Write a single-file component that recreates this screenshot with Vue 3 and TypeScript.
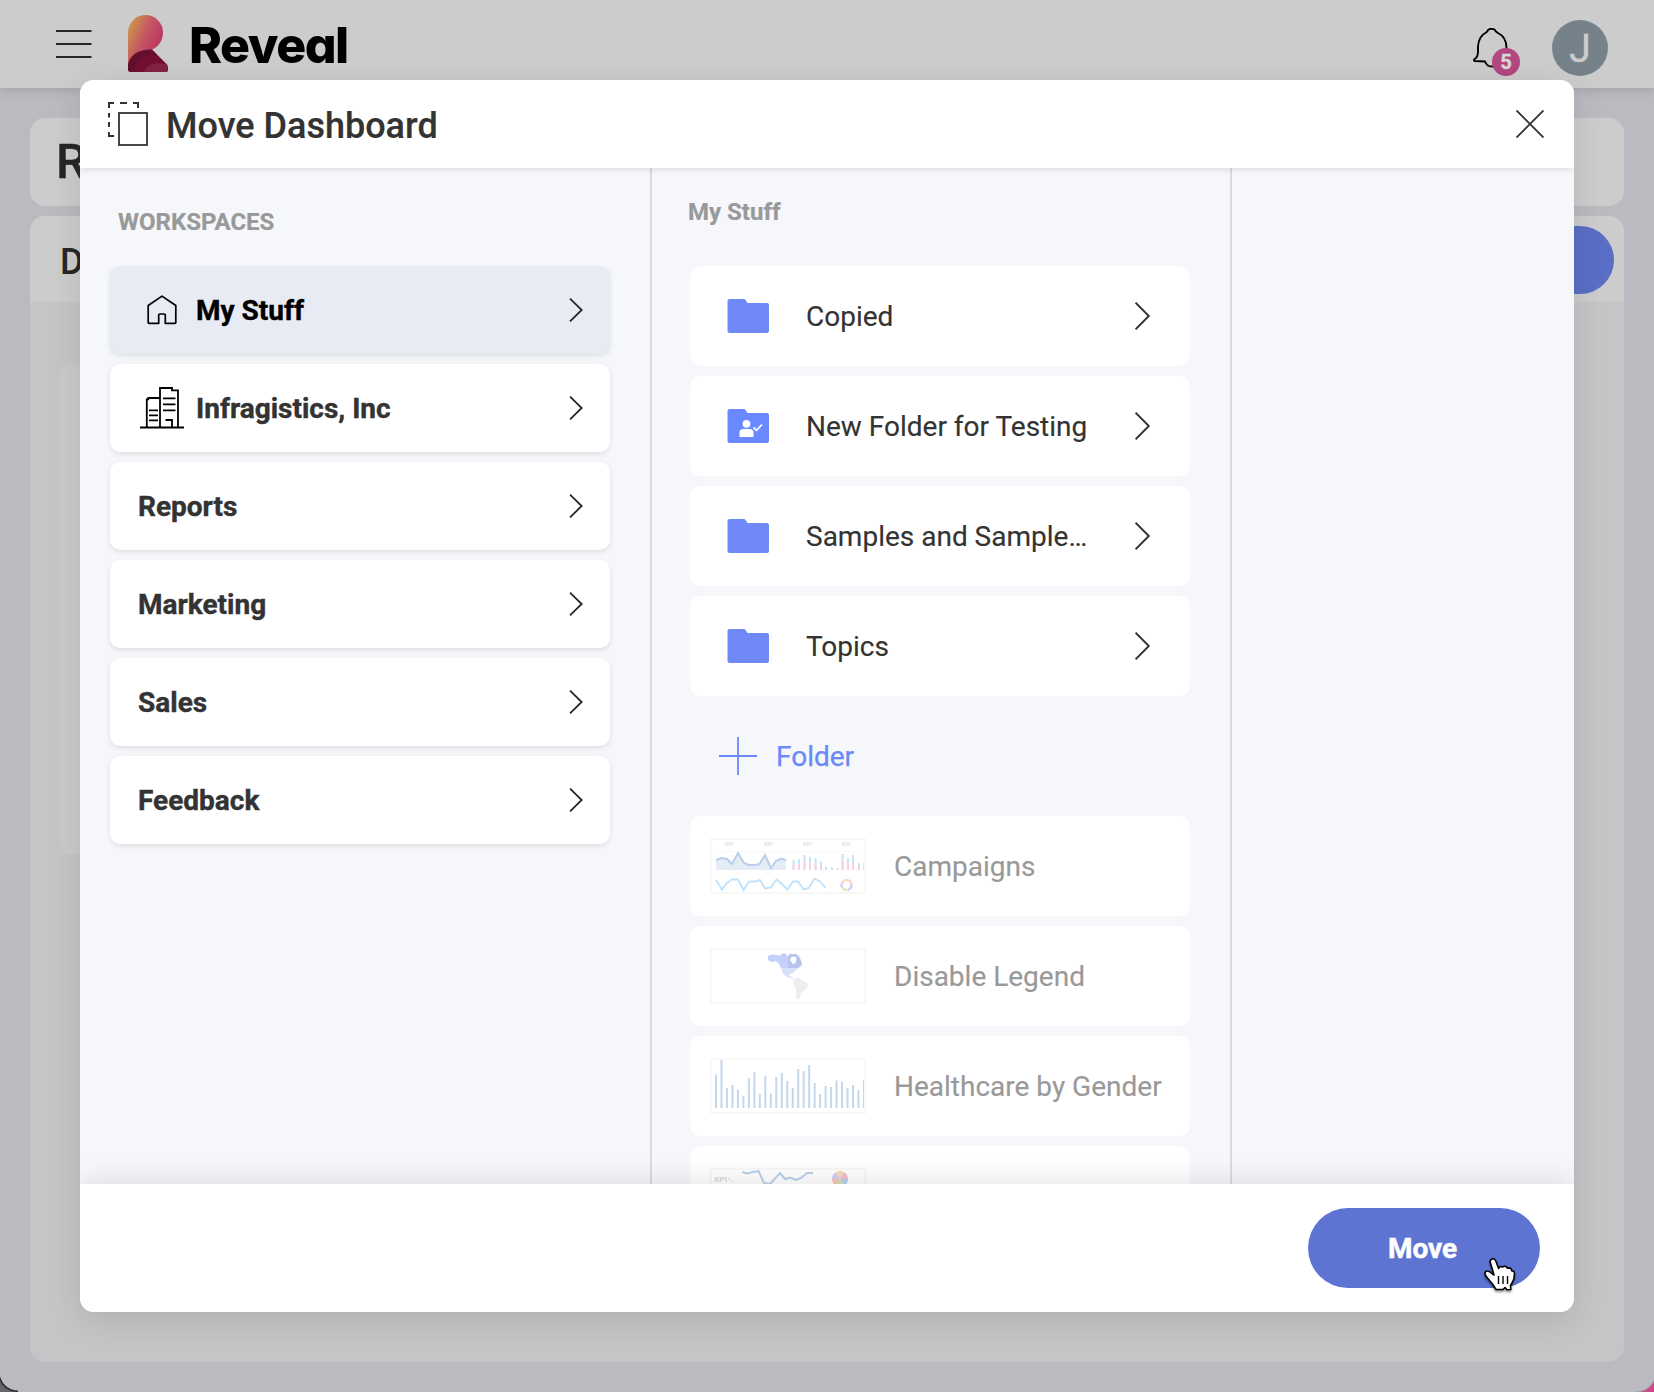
<script setup lang="ts">
interface Workspace { name: string; icon?: 'home' | 'building'; active?: boolean }
interface Folder { name: string; shared?: boolean }

const workspaces: Workspace[] = [
  { name: 'My Stuff', icon: 'home', active: true },
  { name: 'Infragistics, Inc', icon: 'building' },
  { name: 'Reports' },
  { name: 'Marketing' },
  { name: 'Sales' },
  { name: 'Feedback' },
]

const folders: Folder[] = [
  { name: 'Copied' },
  { name: 'New Folder for Testing', shared: true },
  { name: 'Samples and Sample…' },
  { name: 'Topics' },
]

const dashboards: string[] = ['Campaigns', 'Disable Legend', 'Healthcare by Gender', '']

// Bar heights for the healthcare thumbnail, left to right
const bars: number[] = [33.5, 48, 20, 23, 18, 12, 30, 36, 14, 32, 14.5, 31, 35, 27, 20, 39, 37, 43, 25, 14, 22, 21, 27.5, 26, 20, 23, 18, 28]
// Blue and pink parts of the campaign thumbnail's stacked bars: x, total, pink
const stacks: number[][] = [
  [82.5, 10, 5.5], [88, 11, 6], [93.5, 15, 8], [99, 13, 7], [104.5, 12, 6.5], [110, 8.5, 4],
  [115, 3, 1], [121, 3, 1], [126.5, 2, 1], [131.5, 16, 8.5], [137, 12, 6.5], [142, 15, 8], [148, 7, 4], [153.5, 8, 4],
]
</script>

<template>
  <div class="window">
    <header class="topbar">
      <svg class="burger" width="36" height="30" viewBox="0 0 36 30"><path d="M0 2H35.500M0 15H35.500M0 28H35.500" stroke="#262626" stroke-width="2" /></svg>
      <svg class="mark" width="40" height="57" viewBox="0 0 40 57">
        <defs>
          <linearGradient id="flame" x1="0" y1="0.15" x2="0.9" y2="0.75">
            <stop offset="0" stop-color="#ce9b4b" /><stop offset="0.5" stop-color="#c45563" /><stop offset="1" stop-color="#b92f61" />
          </linearGradient>
          <clipPath id="foot"><path d="M0 54V51C1 41 9 34.500 24 34.500L39 49.500Q40 51 40 54.500Q40 57 37.500 57H3Q0 57 0 54Z" /></clipPath>
        </defs>
        <path d="M0 17.500A17.500 17.500 0 0 1 35 17.500C35 26 30 32 24 34.500L18 45L0 52Z" fill="url(#flame)" />
        <path d="M0 54V51C1 41 9 34.500 24 34.500L39 49.500Q40 51 40 54.500Q40 57 37.500 57H3Q0 57 0 54Z" fill="#73102f" />
        <g clip-path="url(#foot)">
          <path d="M0 57V49C2 39 10 34 24 34.500L29 39.500C16 39 8 46 4 57Z" fill="#640f2d" />
          <path d="M16 57C20 49 27 47 38 49L41 57Z" fill="#812444" />
        </g>
      </svg>
      <span class="brand">Reveal</span>
      <span class="spacer"></span>
      <div class="bell">
        <svg width="36" height="40" viewBox="0 0 36 40"><path d="M15 2Q18.500-.5 22 2Q22.500 4 25 5Q33.500 9 33.500 20V25Q34 30 37 33L25 33Q24 38.500 18.500 38.500Q14 38.500 12 33.500L1.500 33Q0 32 3 30Q5 28 5 24V18Q6 8 13 4.500Q14.500 4 15 2Z" fill="none" stroke="#000" stroke-width="1.900" /></svg>
        <span class="badge">5</span>
      </div>
      <div class="avatar">J</div>
    </header>

    <main class="page">
      <section class="panel title">R</section>
      <section class="panel content">
        <div class="toolbar"><span>D</span><span class="pill"></span></div>
        <div class="ghost"></div>
      </section>
    </main>
    <i class="corner left"></i><i class="corner right"></i>

    <div class="dialog">
      <div class="dialog-head">
        <svg class="move-icon" width="40" height="44" viewBox="0 0 40 44" fill="none" stroke="#333" stroke-width="2">
          <rect x="11" y="11" width="28" height="32" stroke-width="1.800" />
          <path d="M6 1H1V6M12 1H19M25 1H30V6M1 11V15.500M1 20V25M1 30V34H6" />
        </svg>
        <h1>Move Dashboard</h1>
        <svg class="close" width="28" height="28" viewBox="0 0 28 28"><path d="M.5.5 27.500 27.500M27.500.5.5 27.500" stroke="#333" stroke-width="1.900" /></svg>
      </div>

      <div class="columns">
        <div class="col first">
          <h2>WORKSPACES</h2>
          <div v-for="w in workspaces" :key="w.name" class="ws" :class="{ active: w.active, iconed: w.icon }">
            <span v-if="w.icon" class="ws-icon">
              <svg v-if="w.icon === 'home'" width="30" height="30" viewBox="0 0 30 30"><path d="M1.200 10.500 15 1.100 28.800 10.500V27.500Q28.800 28.300 28 28.300H18.300V20Q18.300 19 17.300 19H12.700Q11.700 19 11.700 20V28.300H2Q1.200 28.300 1.200 27.500Z" fill="none" stroke="#000" stroke-width="1.700" stroke-linejoin="round" /></svg>
              <svg v-else width="44" height="42" viewBox="0 0 44 42" fill="none" stroke="#000" stroke-width="1.800"><path d="M0 40.500H44M6.800 40V12.300H8.300V11H19.800M20 40V1H32V3.300H38V40M23 11.300H35.500M23 17.300H35.500M23 23.300H35.500M9 23.300H18M9 28.300H18M9 33.300H18M25.500 33H32V40" /></svg>
            </span>
            <span class="ws-name">{{ w.name }}</span>
            <svg class="chev" width="14" height="24" viewBox="0 0 14 24"><path d="M1 .7 12.700 12 1 23.300" fill="none" stroke="#262626" stroke-width="1.800" /></svg>
          </div>
        </div>

        <div class="col second">
          <h2>My Stuff</h2>
          <div v-for="f in folders" :key="f.name" class="item">
            <svg class="folder" width="42" height="34" viewBox="0 0 42 34">
              <path d="M2.500 0H17Q18 0 18.500 1L20.500 4H40Q42 4 42 6V32Q42 34 40 34H2.500Q.5 34 .5 32V2Q.5 0 2.500 0Z" :fill="f.shared ? '#6a88ff' : '#6f8af7'" />
              <g v-if="f.shared" fill="#fff"><circle cx="19.500" cy="14.800" r="3.900" /><path d="M12.500 28V23.500Q12.500 20 16.500 20H22.500Q26.500 20 26.500 23.500V28Z" /><path d="M26.500 18.500 29.500 21.300 35 15.500" fill="none" stroke="#fff" stroke-width="1.800" /></g>
            </svg>
            <span class="item-name">{{ f.name }}</span>
            <svg class="chev" width="16" height="28" viewBox="0 0 16 28"><path d="M.6 .7 13.800 14 .6 27.300" fill="none" stroke="#333" stroke-width="1.900" /></svg>
          </div>

          <div class="add">
            <svg width="38" height="38" viewBox="0 0 38 38"><path d="M19 0V38M0 19H38" stroke="#6b88fb" stroke-width="1.800" /></svg>
            <span>Folder</span>
          </div>

          <div v-for="(d, i) in dashboards" :key="i" class="item dash">
            <svg class="thumb" width="156" height="56" viewBox="0 0 156 56">
              <g v-if="i === 0">
                <path d="M7 13.500H153" stroke="#f9f9f9" />
                <g class="kpi" font-size="5"><text x="15" y="8">KPI•</text><text x="54" y="8">KPI•</text><text x="93" y="8">KPI•</text><text x="132" y="8">KPI•</text></g>
                <path d="M6 22 11.500 20 17 21 22 26 28 15 34 25 39 27H45L49.500 26 55 17 61 30 66 23 71 20.500 76 22V32H6Z" fill="#e5ecf6" />
                <path d="M6 22 11.500 20 17 21 22 26 28 15 34 25 39 27H45L49.500 26 55 17 61 30 66 23 71 20.500 76 22" fill="none" stroke="#bacfe9" stroke-width="2" />
                <path d="M6 42 12 51.500 17 45 22 41.500H28L33.500 52 39 43.500H45L50 42 55 50.500 61 49.500 66.500 41.500 72 46 77.500 51.500 83 43.500H88L93.500 51.500 99 50 104.500 40.500 110 43.500 115.500 50" fill="none" stroke="#c1e2fb" stroke-width="1.900" />
                <g v-for="(s, k) in stacks" :key="k"><rect :x="s[0]" :y="32 - s[1]" width="2" :height="s[1]" fill="#c5e5fa" /><rect :x="s[0]" :y="32 - s[2]" width="2" :height="s[2]" fill="#fad0de" /></g>
                <g fill="none" stroke-width="2.400" stroke-dasharray="6.280 25.130"><circle cx="136.500" cy="47" r="5" stroke="#fad0de" stroke-dashoffset="6.280" /><circle cx="136.500" cy="47" r="5" stroke="#c6d6ee" /><circle cx="136.500" cy="47" r="5" stroke="#d6edc9" stroke-dashoffset="-6.280" /><circle cx="136.500" cy="47" r="5" stroke="#ddd0f3" stroke-dashoffset="-12.560" /><circle cx="136.500" cy="47" r="5" stroke="#fbdcbf" stroke-dashoffset="-18.840" /></g>
              </g>
              <g v-else-if="i === 1">
                <path d="M58 8 62 6.500 72 7.500H77L84 9 88 7 90 11 91.500 14 92 17 88 20H71L69 16 66 13 61 14 58 12Z" fill="#c5d0fb" />
                <path d="M78 8H82L86 10H90L92 17 88 20H78Z" fill="#b7c3ee" />
                <path d="M71 6 75 5.500 77 7.500 72 8ZM79 6 86 6 89 8 90 12 86 10 79 8Z" fill="#b9c6f2" />
                <path d="M80 12 81 9.500 83.500 8.500 86.500 9.500 86 14 83 16.500 81.500 14Z" fill="#fff" />
                <path d="M71 20H88L83 25 80 26 79 28 82 29 84 31 77 29 73 26Z" fill="#d9e0fc" />
                <path d="M84 31 88 30 92 32 98 36 96 41 91 45 89 51 86 51 86 40 83 35Z" fill="#ededed" />
              </g>
              <g v-else-if="i === 2"><rect v-for="(h, k) in bars" :key="k" :x="5 + k * 5.480" :y="50 - h" width="2" :height="h" fill="#c3d7ed" /></g>
              <g v-else>
                <g class="kpi bold"><text x="4.500" y="14" font-size="8">KPI</text></g><path d="M18 10 22 13" stroke="#c9c9fb" stroke-dasharray="1 1" />
                <path d="M32 4 37.500 5.500 43 4 48.500 3 54 15 60 16 70 5 75 11 80 9.500 86 12 91 10 97 5H103" fill="none" stroke="#b9d0ea" stroke-width="2" />
                <g transform="translate(130 11)"><path d="M0 0-4-7A8 8 0 0 1 4-7Z" fill="#fadcb2" /><path d="M0 0 4-7A8 8 0 0 1 8 0Z" fill="#f5bdd2" /><path d="M0 0H8A8 8 0 0 1 4 7Z" fill="#b9cfea" /><path d="M0 0 4 7A8 8 0 0 1-4 7Z" fill="#c9e5b8" /><path d="M0 0-4 7A8 8 0 0 1-8 0Z" fill="#fbc6b8" /><path d="M0 0H-8A8 8 0 0 1-4-7Z" fill="#d9cbf2" /></g>
              </g>
              <rect x="1" y="1" width="154" height="54" fill="none" stroke="#f7f7f7" stroke-width="2" />
            </svg>
            <span class="dash-name">{{ d }}</span>
          </div>
        </div>
        <div class="col third"></div>
      </div>

      <div class="dialog-foot">
        <button class="move">Move</button>
      </div>
    </div>

    <svg class="cursor" width="34" height="38" viewBox="0 0 34 38">
      <path d="M9 2Q11.500 1 12.800 4L15.600 11.500Q16.500 8.600 19.500 10Q22.500 8 24.300 11.200Q28 10 29 14Q31.500 13.500 31.500 17Q31.500 22 29 26L27.500 28.500 27.800 32.500 24 32.800 22 30.500 20 32.500H13L9.500 27 4 20.500Q1 17 2.500 14.800Q5 12.500 9.500 17L11 18 7.300 5.500Q6.500 3 9 2Z" fill="#fff" stroke="#000" stroke-width="1.600" stroke-linejoin="round" />
      <path d="M15.500 19V27M20 19V27M24.500 19V27" stroke="#000" stroke-width="1.400" />
    </svg>
  </div>
</template>

<style>
body { margin: 0; background: #c9c9c9; }
</style>

<style scoped>
* { box-sizing: border-box; }
svg { display: block; flex: none; }
.window { position: relative; width: 1654px; height: 1392px; overflow: hidden; background: #b9bbc1; font-family: Roboto, sans-serif; color: #333; }
.topbar { position: relative; height: 88px; display: flex; align-items: flex-start; background: #ccc; box-shadow: 0 2px 10px rgba(0, 0, 0, .14); padding-right: 46px; }
.burger { margin: 29px 0 0 56px; }
.mark { margin: 15px 0 0 36px; padding-top: 0; }
.brand { margin: 15px 0 0 21px; font: 800 50px/60px Inter, sans-serif; font-feature-settings: "cv11"; letter-spacing: -1.500px; color: #000; }
.spacer { flex: 1; }
.bell { position: relative; margin: 28px 0 0; width: 79px; height: 48px; }
.badge { position: absolute; left: 19px; top: 20px; width: 28px; height: 28px; border-radius: 50%; background: #b3477f; color: #d8d8d8; font-weight: 700; font-size: 20px; line-height: 29px; text-align: center; -webkit-text-stroke: .4px #d8d8d8; }
.avatar { margin-top: 20px; width: 56px; height: 56px; border-radius: 50%; background: #758289; color: #ccc; font-size: 39px; line-height: 58px; text-align: center; -webkit-text-stroke: .4px #ccc; }
.page { padding: 30px; display: flex; flex-direction: column; gap: 10px; height: 1304px; }
.panel { background: #ccc; border-radius: 15px; }
.title { height: 88px; padding-left: 26px; font-weight: 500; font-size: 49px; line-height: 87px; color: #262626; -webkit-text-stroke: .4px #262626; }
.content { flex: 1; background: #c4c5c6; overflow: hidden; }
.toolbar { height: 86px; padding: 10px 10px 0 30px; display: flex; justify-content: space-between; background: #ccc; font-weight: 500; font-size: 36px; line-height: 72px; color: #262626; }
.pill { width: 160px; height: 68px; border-radius: 34px; background: #5a6ec5; }
.ghost { margin: 62px 0 0 30px; width: 400px; height: 490px; border-radius: 10px; background: #cacaca; }
.corner { position: absolute; bottom: 0; width: 18px; height: 20px; }
.corner.left { left: 0; background: radial-gradient(circle at 100% 0, transparent 18px, #222 19px, #666 21px); }
.corner.right { right: 0; background: radial-gradient(circle at 0 0, transparent 19px, #999 20px, #d0458c 21px); }
.dialog { position: absolute; isolation: isolate; left: 80px; top: 80px; width: 1494px; height: 1232px; display: flex; flex-direction: column; border-radius: 14px; overflow: hidden; background: #f5f7fb; box-shadow: 0 8px 32px rgba(0, 0, 0, .11); }
.dialog-head { position: relative; z-index: 1; height: 88px; flex: none; display: flex; padding: 0 30px 0 28px; background: #fff; box-shadow: 0 2px 6px rgba(0, 0, 0, .1); }
.move-icon { margin-top: 22px; }
h1 { margin: 0 0 0 18px; flex: 1; font-weight: 500; font-size: 36px; line-height: 93px; height: 88px; -webkit-text-stroke: .2px #333; }
.close { margin-top: 30px; }
.columns { flex: 1; min-height: 0; display: flex; overflow: hidden; }
.col { flex: none; }
.first { width: 572px; padding: 0 40px 0 30px; border-right: 2px solid #d9dbe0; }
.second { width: 580px; padding: 0 40px 0 38px; border-right: 2px solid #d9dbe0; }
h2 { margin: 0; font-weight: 700; font-size: 24px; color: #999; -webkit-text-stroke: .2px #999; }
.first h2 { height: 98px; padding-left: 8px; line-height: 108px; }
.second h2 { height: 98px; padding-left: 0; margin-left: -2px; line-height: 88px; }
.ws { width: 500px; height: 88px; margin-bottom: 10px; padding: 0 27px 0 28px; display: flex; align-items: center; border-radius: 10px; background: #fff; box-shadow: 0 2px 5px rgba(0, 0, 0, .1); font-weight: 700; font-size: 28px; }
.ws-name { flex: 1; -webkit-text-stroke: .4px currentColor; }
.ws.active { background: #e8ebf3; color: #000; }
.ws.iconed { padding-left: 30px; }
.ws-icon { width: 44px; margin-right: 12px; display: flex; justify-content: center; }
.item { width: 500px; height: 100px; margin-bottom: 10px; padding: 0 39px 0 37px; display: flex; align-items: center; border-radius: 10px; background: #fff; font-size: 28px; -webkit-text-stroke: .15px currentColor; }
.item svg { -webkit-text-stroke: 0; }
.item-name { margin-left: 37px; white-space: nowrap; }
.item .chev { margin-left: auto; }
.add { height: 100px; margin-bottom: 10px; padding-left: 29px; display: flex; align-items: center; gap: 19px; color: #6b88fb; font-size: 28px; -webkit-text-stroke: .25px currentColor; }
.dash { padding: 0 0 0 20px; }
.dash-name { margin-left: 28px; color: #999; }
.kpi { fill: #d4d4d4; font-family: Roboto, sans-serif; }
.kpi.bold { font-weight: 500; }
.dialog-foot { position: relative; z-index: 1; flex: none; height: 128px; padding: 24px 34px; display: flex; justify-content: flex-end; background: #fff; box-shadow: 0 -4px 24px rgba(0, 0, 0, .1); }
.move { width: 232px; height: 80px; padding: 1px 3px 0 0; border: 0; border-radius: 40px; background: #5e74d2; color: #fff; font: 700 28px/80px Roboto, sans-serif; -webkit-text-stroke: .5px #fff; }
.cursor { position: absolute; z-index: 2; left: 1483px; top: 1257px; filter: drop-shadow(0 2px 1px rgba(0, 0, 0, .4)); }
</style>
